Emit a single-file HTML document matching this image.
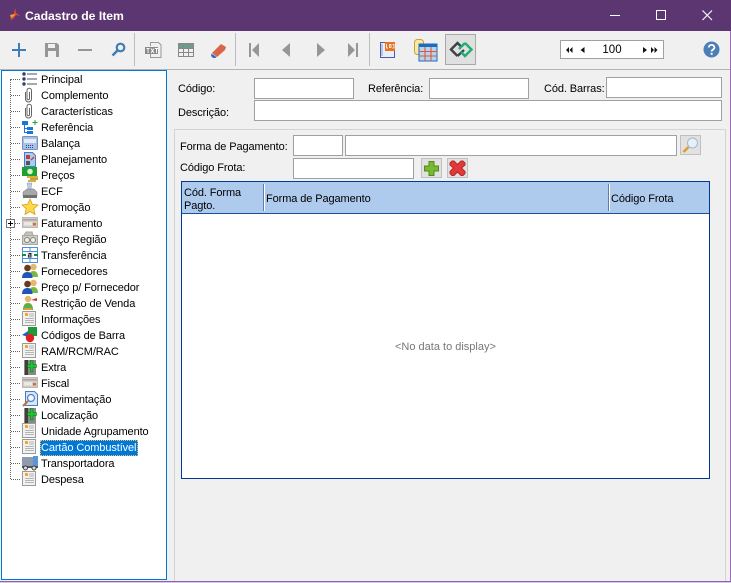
<!DOCTYPE html>
<html><head><meta charset="utf-8"><style>
html,body{margin:0;padding:0;width:731px;height:583px;overflow:hidden;background:#f0f0f0}
body{position:relative;font:11px "Liberation Sans",sans-serif;letter-spacing:-.1px;color:#000}
.a{position:absolute}
.t{position:absolute;white-space:nowrap;line-height:14px;height:14px;margin-top:1px}
.i{position:absolute;background:#fff;border:1px solid #a0a0a0;box-sizing:border-box}
.s{position:absolute;left:22px;width:16px;height:16px}
.b{position:absolute;background:#e1e1e1;border:1px solid #c0c0c0;box-sizing:border-box}
svg{position:absolute;overflow:visible}
</style></head><body>
<svg width="0" height="0" style="left:0;top:0"><defs>
<symbol id="doc" viewBox="0 0 16 16"><rect x=".5" y=".5" width="13" height="14" fill="#f2f2f2" stroke="#9a9a9a"/><rect x="3" y="2" width="3" height="3" fill="#f5a623"/><path d="M7 3h5M7 5h5M3 7.500h9M3 9.500h9M3 11.500h9" stroke="#b4b4b4"/></symbol>
<symbol id="clip" viewBox="0 0 16 16"><path d="M3.500 5v7a3 3 0 0 0 6 0V3.500a2.200 2.200 0 0 0-4.500 0V11.500a1 1 0 0 0 2.500 0V5" fill="none" stroke="#666" stroke-width="1"/></symbol>
<symbol id="card" viewBox="0 0 16 16"><rect x="0.500" y="2.500" width="15" height="10" fill="#d2cdca" stroke="#bcb8b4"/><rect x="1" y="4" width="14" height="1.500" fill="#a8a29e"/><rect x="2" y="7" width="8" height="3.500" fill="#ece8e6"/><rect x="11" y="8" width="3" height="2.500" fill="#d9683c"/></symbol>
<symbol id="ppl" viewBox="0 0 16 16"><circle cx="11.500" cy="4" r="3.200" fill="#e8b56f"/><path d="M7 14c0-4 2-6 4.500-6S16 10 16 14z" fill="#76b843"/><circle cx="5.500" cy="5" r="3.300" fill="#6b3a1e"/><path d="M0 15c0-4 2-6 5.500-6S10.500 11 10.500 15z" fill="#2255b8"/></symbol>
<symbol id="ext" viewBox="0 0 16 16"><rect x="2" y="1" width="12" height="15" fill="#8a8a84"/><rect x="3" y="1" width="3" height="15" fill="#3f3f3c"/><path d="M8.500 1.500h2.500v4h3.500v3H11v4.500H8.500V8.500H5.500v-3h3z" fill="#17c92f" stroke="#0c6a1c" stroke-width=".5"/></symbol>
</defs></svg>

<!-- title bar -->
<div class="a" style="left:0;top:0;width:731px;height:31px;background:#5c3670"></div>
<svg style="left:9px;top:8px" width="12" height="12"><path d="M6 0L7 5 11 8 7 7 4 11 1 12 5 6z" fill="#e8502a"/><path d="M1 7l4-1 1 1-4 3z" fill="#f0a030"/></svg>
<div class="t" style="left:25px;top:8px;color:#fff;font-weight:bold;font-size:12.2px;letter-spacing:0">Cadastro de Item</div>
<div class="a" style="left:610px;top:15px;width:10px;height:1px;background:#fff"></div>
<div class="a" style="left:656px;top:10px;width:10px;height:10px;border:1px solid #fff;box-sizing:border-box"></div>
<svg style="left:702px;top:10px" width="11" height="11"><path d="M.5.5l9.500 9.500M10 .5L.5 10" stroke="#fff" stroke-width="1.100"/></svg>

<!-- toolbar -->
<div class="a" style="left:0;top:69px;width:731px;height:1px;background:#b4b4b4"></div>
<div class="a" style="left:134px;top:33px;width:1px;height:33px;background:#bdbdbd"></div>
<div class="a" style="left:235px;top:33px;width:1px;height:33px;background:#bdbdbd"></div>
<div class="a" style="left:369px;top:33px;width:1px;height:33px;background:#bdbdbd"></div>
<svg style="left:12px;top:43px" width="14" height="14"><path d="M7 0v14M0 7h14" stroke="#3f7cb8" stroke-width="2"/></svg>
<svg style="left:45px;top:43px" width="14" height="14"><path d="M0 0h12l2 2v12H0z" fill="#969696"/><rect x="3" y="1" width="7" height="4" fill="#f0f0f0"/><rect x="3" y="8" width="8" height="6" fill="#f0f0f0"/></svg>
<div class="a" style="left:78px;top:49px;width:14px;height:2px;background:#969696"></div>
<svg style="left:111px;top:42px" width="15" height="15"><circle cx="9.500" cy="5.500" r="3.800" fill="none" stroke="#3f7cb8" stroke-width="2.200"/><path d="M6.500 8.500L1.500 13.500" stroke="#3f7cb8" stroke-width="2.600"/></svg>
<svg style="left:145px;top:42px" width="17" height="16"><path d="M5.500 4V.5h8l2.500 2.500V15.500H5.500V12" fill="#f0f0f0" stroke="#999"/><rect x="0" y="5" width="13" height="7" fill="#8a8a8a"/><path d="M1.500 6.500h3M3 6.500V11M6 6.500l3 4.500M9 6.500l-3 4.500M10 6.500h3M11.500 6.500V11" stroke="#fff" stroke-width=".9" fill="none"/></svg>
<svg style="left:178px;top:43px" width="16" height="14"><rect x=".5" y=".5" width="15" height="13" fill="#f0f0f0" stroke="#888"/><rect x="1" y="1" width="14" height="4" fill="#6d9c8c"/><path d="M0 5.500h16M0 9.500h16M5.500 1v13M10.500 1v13" stroke="#888"/></svg>
<svg style="left:211px;top:42px" width="16" height="16"><path d="M1 11L10 2l5 3-1 3-8 7z" fill="#d9644a"/><path d="M0.500 11.500l5 3.500-1 1H2L0 14z" fill="#2f70c0"/></svg>
<svg style="left:249px;top:43px" width="10" height="14"><path d="M0 0h2v14H0zM10 0v14L3 7z" fill="#969696"/></svg>
<svg style="left:282px;top:43px" width="8" height="14"><path d="M8 0v14L0 7z" fill="#969696"/></svg>
<svg style="left:317px;top:43px" width="8" height="14"><path d="M0 0v14l8-7z" fill="#969696"/></svg>
<svg style="left:348px;top:43px" width="10" height="14"><path d="M8 0h2v14H8zM0 0v14l7-7z" fill="#969696"/></svg>
<svg style="left:380px;top:41px" width="15" height="17"><rect x=".5" y="1.500" width="14" height="15" fill="#e8eefa" stroke="#4a5fa8"/><path d="M2 3v12" stroke="#8aa0d0"/><rect x="5" y="1" width="10" height="9" fill="#e8741e"/><path d="M6.500 3v4h1.500M9.500 3.500h1.500v3h-1.500zM12.500 3.500h1.500v3.500h-1.500" stroke="#fff" fill="none" stroke-width=".8"/></svg>
<svg style="left:414px;top:39px" width="23" height="23"><rect x=".5" y=".500" width="9" height="15" rx="3" fill="#fbe7a8" stroke="#c9a130"/><rect x="5" y="5" width="18" height="17" fill="#b5d5ef" stroke="#1a6cc0"/><rect x="5" y="5" width="18" height="3" fill="#1a6cc0"/><path d="M5 12.500h18M5 17h18M11 8v14M17 8v14" stroke="#e2553a" stroke-width="1.100"/></svg>
<div class="a" style="left:445px;top:34px;width:31px;height:31px;background:#e0e0e0;border:1px solid #a8a8a8;box-sizing:border-box"></div>
<svg style="left:450px;top:41px" width="23" height="17"><path d="M7.500 15L1 8.500 7.500 2 11.500 6M7.500 15L14 9" fill="none" stroke="#3c4048" stroke-width="2.400"/><path d="M15 2L21.500 8.500 15 15 11 11M15 2L9 8" fill="none" stroke="#1fae72" stroke-width="2.400"/></svg>
<div class="a" style="left:560px;top:40px;width:104px;height:19px;background:#fff;border:1px solid #a0a0a0;box-sizing:border-box"></div>
<svg style="left:566px;top:47px" width="92" height="6"><path d="M0 3l3-3v6zM3.500 3l3-3v6zM14.500 3l4-3v6zM77 0l4 3-4 3zM85 0l3 3-3 3zM88.500 0l3 3-3 3z" fill="#111"/></svg>
<div class="t" style="left:592px;top:42px;width:40px;text-align:center;font-size:11.500px;letter-spacing:0">100</div>
<svg style="left:703px;top:41px" width="17" height="17"><circle cx="8.500" cy="8.500" r="8" fill="#4a7fb8"/><path d="M5.800 6.500c0-3.500 5.600-3.500 5.600 0 0 2.200-2.800 2-2.800 4" fill="none" stroke="#fff" stroke-width="1.800"/><rect x="7.600" y="11.800" width="2" height="2" fill="#fff"/></svg>

<!-- tree -->
<div class="a" style="left:1px;top:70px;width:166px;height:510px;background:#fff;border:1px solid #0078d7;box-sizing:border-box"></div>
<div class="a" style="left:10px;top:79px;height:400px;border-left:1px dotted #666"></div>
<svg style="left:0;top:0" width="40" height="490"><path d="M11 79.500h9M11 95.500h9M11 111.500h9M11 127.500h9M11 143.500h9M11 159.500h9M11 175.500h9M11 191.500h9M11 207.500h9M15 223.500h5M11 239.500h9M11 255.500h9M11 271.500h9M11 287.500h9M11 303.500h9M11 319.500h9M11 335.500h9M11 351.500h9M11 367.500h9M11 383.500h9M11 399.500h9M11 415.500h9M11 431.500h9M11 447.500h9M11 463.500h9M11 479.500h9" stroke="#666" stroke-dasharray="1 1" fill="none"/></svg>
<div class="a" style="left:6px;top:219px;width:9px;height:9px;background:#fff;border:1px solid #777;box-sizing:border-box"></div>
<svg style="left:6px;top:219px" width="9" height="9"><path d="M2 4.500h5M4.500 2v5" stroke="#000"/></svg>

<svg class="s" style="top:71px"><circle cx="2" cy="3" r="1.700" fill="#33405c"/><circle cx="2" cy="8" r="1.700" fill="#33405c"/><circle cx="2" cy="13" r="1.700" fill="#33405c"/><path d="M5 3h10M5 8h10M5 13h10" stroke="#44506c"/></svg>
<svg class="s" style="top:87px"><use href="#clip" width="16" height="16"/></svg>
<svg class="s" style="top:103px"><use href="#clip" width="16" height="16"/></svg>
<svg class="s" style="top:119px"><rect x="0" y="2" width="6" height="4" fill="#1a76d8"/><rect x="5" y="8" width="6" height="3" fill="#1a76d8"/><rect x="5" y="12" width="6" height="3" fill="#1a76d8"/><path d="M2.500 6v7.500H5M2.500 9.500H5" stroke="#1a76d8" fill="none"/><path d="M13 1v5M10.500 3.500h5" stroke="#2a9a3a"/></svg>
<svg class="s" style="top:135px"><rect x=".5" y="1.500" width="15" height="13" rx="1" fill="#a8c0e8" stroke="#7c90b8"/><rect x="2" y="4" width="12" height="4" fill="#e4ecfa"/><path d="M4 10.500h8M4 12.500h8" stroke="#334a80" stroke-dasharray="1 1"/></svg>
<svg class="s" style="top:151px"><path d="M2.500 1.500h8l3 3v11h-11z" fill="#a8cdf0" stroke="#4a7cc0"/><rect x="4" y="4" width="4" height="4" fill="#c04040"/><rect x="4" y="10" width="4" height="4" fill="#555"/><path d="M9 9l3-3" stroke="#d04030" stroke-width="1.500"/></svg>
<svg class="s" style="top:167px"><rect x="0" y="0" width="15" height="9" fill="#1ea030"/><circle cx="8" cy="4.500" r="2.800" fill="#d8f5d0"/><rect x="5" y="9" width="11" height="2" fill="#d8b040"/><rect x="8" y="11" width="8" height="2" fill="#c8a030"/><rect x="6" y="13" width="8" height="2" fill="#d8b040"/></svg>
<svg class="s" style="top:183px"><path d="M5 0h5l-1 5 1 2H5l1-2z" fill="#b8cce8" stroke="#8aa0c8" stroke-width=".5"/><path d="M1 9l4-3h7l3 3v4H1z" fill="#a8a8a8" stroke="#777" stroke-width=".5"/><rect x="1" y="12" width="14" height="3" fill="#707070"/></svg>
<svg class="s" style="top:199px"><path d="M8 0l2.400 5.300 5.600.6-4.200 3.800 1.200 5.700L8 12.500 3 15.400l1.200-5.700L0 5.900l5.600-.6z" fill="#fdd848" stroke="#d8a020" stroke-width=".8"/></svg>
<svg class="s" style="top:215px"><use href="#card" width="16" height="16"/></svg>
<svg class="s" style="top:231px"><rect x=".5" y="4.500" width="15" height="9" fill="#cfcfc8" stroke="#a8a8a0"/><path d="M2 4l2-3h6l1 3" fill="#c4c4bc" stroke="#a8a8a0"/><circle cx="5" cy="9" r="2.500" fill="#eee" stroke="#808878"/><circle cx="11" cy="9" r="2.500" fill="#eee" stroke="#808878"/></svg>
<svg class="s" style="top:247px"><rect x=".5" y=".5" width="15" height="15" fill="#fff" stroke="#4a90e0"/><path d="M0 4.500h16M0 11.500h16M8 0v4M8 12v4" stroke="#4a90e0"/><path d="M0 8h4M12 8h4" stroke="#1a8a3a" stroke-width="2"/><rect x="5" y="5" width="6" height="6" fill="#e4f0fa"/><path d="M6.500 6.500h2.500v3.500H6.500V8H9" stroke="#222" fill="none" stroke-width=".9"/></svg>
<svg class="s" style="top:263px"><use href="#ppl" width="16" height="16"/></svg>
<svg class="s" style="top:279px"><use href="#ppl" width="16" height="16"/></svg>
<svg class="s" style="top:295px"><circle cx="6" cy="4" r="3.200" fill="#e8b56f"/><path d="M1 15c0-5 2-7 5-7s5 2 5 7z" fill="#5cae48"/><rect x="2" y="13" width="8" height="2" fill="#d8a030"/><path d="M9 5l6-2v3z" fill="#d82a2a"/></svg>
<svg class="s" style="top:311px"><use href="#doc" width="16" height="16"/></svg>
<svg class="s" style="top:327px"><rect x="6" y="0" width="9" height="9" fill="#1f9a38"/><path d="M0 8l6-4v6z" fill="#2060c8"/><circle cx="8" cy="11" r="4.200" fill="#e02020"/></svg>
<svg class="s" style="top:343px"><use href="#doc" width="16" height="16"/></svg>
<svg class="s" style="top:359px"><use href="#ext" width="16" height="16"/></svg>
<svg class="s" style="top:375px"><use href="#card" width="16" height="16"/></svg>
<svg class="s" style="top:391px"><path d="M3.500.5h9l3 3v11h-12z" fill="#d4e6fa" stroke="#4a7cc0"/><circle cx="9" cy="7" r="3.500" fill="#eef6ff" stroke="#5a80b8" stroke-width="1.200"/><path d="M6 10l-5 5" stroke="#b07a30" stroke-width="2"/></svg>
<svg class="s" style="top:407px"><use href="#ext" width="16" height="16"/></svg>
<svg class="s" style="top:423px"><use href="#doc" width="16" height="16"/></svg>
<svg class="s" style="top:439px"><use href="#doc" width="16" height="16"/></svg>
<svg class="s" style="top:455px"><rect x="0" y="2" width="11" height="9" fill="#8e9cb0"/><rect x="11" y="1" width="5" height="10" fill="#5a96d8"/><rect x="0" y="11" width="16" height="2" fill="#555"/><circle cx="3.500" cy="13" r="2" fill="#ddd" stroke="#444"/><circle cx="12" cy="13" r="2" fill="#ddd" stroke="#444"/></svg>
<svg class="s" style="top:471px"><use href="#doc" width="16" height="16"/></svg>

<div class="a" style="left:40px;top:440px;width:98px;height:16px;background:#0078d7;border:1px dotted #f0c060;box-sizing:border-box"></div>
<div class="t" style="left:41px;top:72px">Principal</div>
<div class="t" style="left:41px;top:88px">Complemento</div>
<div class="t" style="left:41px;top:104px">Características</div>
<div class="t" style="left:41px;top:120px">Referência</div>
<div class="t" style="left:41px;top:136px">Balança</div>
<div class="t" style="left:41px;top:152px">Planejamento</div>
<div class="t" style="left:41px;top:168px">Preços</div>
<div class="t" style="left:41px;top:184px">ECF</div>
<div class="t" style="left:41px;top:200px">Promoção</div>
<div class="t" style="left:41px;top:216px">Faturamento</div>
<div class="t" style="left:41px;top:232px">Preço Região</div>
<div class="t" style="left:41px;top:248px">Transferência</div>
<div class="t" style="left:41px;top:264px">Fornecedores</div>
<div class="t" style="left:41px;top:280px">Preço p/ Fornecedor</div>
<div class="t" style="left:41px;top:296px">Restrição de Venda</div>
<div class="t" style="left:41px;top:312px">Informações</div>
<div class="t" style="left:41px;top:328px">Códigos de Barra</div>
<div class="t" style="left:41px;top:344px">RAM/RCM/RAC</div>
<div class="t" style="left:41px;top:360px">Extra</div>
<div class="t" style="left:41px;top:376px">Fiscal</div>
<div class="t" style="left:41px;top:392px">Movimentação</div>
<div class="t" style="left:41px;top:408px">Localização</div>
<div class="t" style="left:41px;top:424px">Unidade Agrupamento</div>
<div class="t" style="left:41px;top:440px;color:#fff">Cartão Combustível</div>
<div class="t" style="left:41px;top:456px">Transportadora</div>
<div class="t" style="left:41px;top:472px">Despesa</div>

<!-- top form -->
<div class="t" style="left:178px;top:81px">Código:</div>
<div class="i" style="left:254px;top:78px;width:100px;height:21px"></div>
<div class="t" style="left:368px;top:81px">Referência:</div>
<div class="i" style="left:429px;top:78px;width:100px;height:21px"></div>
<div class="t" style="left:544px;top:81px">Cód. Barras:</div>
<div class="i" style="left:606px;top:77px;width:116px;height:21px"></div>
<div class="t" style="left:178px;top:105px">Descrição:</div>
<div class="i" style="left:254px;top:100px;width:468px;height:21px"></div>

<!-- panel -->
<div class="a" style="left:174px;top:129px;width:552px;height:453px;border:1px solid #d4d4d4;border-bottom:0;box-sizing:border-box"></div>
<div class="t" style="left:180px;top:139px">Forma de Pagamento:</div>
<div class="i" style="left:293px;top:135px;width:50px;height:21px"></div>
<div class="i" style="left:345px;top:135px;width:332px;height:21px"></div>
<div class="b" style="left:680px;top:135px;width:21px;height:20px"></div>
<svg style="left:682px;top:137px" width="17" height="17"><circle cx="10.500" cy="6" r="5" fill="#e4f0fc" stroke="#a8b8cc"/><path d="M6.500 10L1.500 15" stroke="#e09a28" stroke-width="2.400"/></svg>
<div class="t" style="left:180px;top:160px">Código Frota:</div>
<div class="i" style="left:293px;top:158px;width:121px;height:21px"></div>
<div class="b" style="left:421px;top:158px;width:21px;height:20px"></div>
<svg style="left:424px;top:161px" width="15" height="15"><path d="M5 .5h5v4.500h4.500v5H10v4.500H5V10H.5V5H5z" fill="#7ab82e" stroke="#4f8a1c"/></svg>
<div class="b" style="left:447px;top:158px;width:21px;height:20px"></div>
<svg style="left:449px;top:160px" width="17" height="16"><path d="M1 3l2-2 2 0 3.500 3.500L12 1h2l2 2v2l-3.500 3 3.500 3.500v2l-2 2h-2L8.500 12 5 15.500H3l-2-2v-2L4.500 8 1 5z" fill="#e2383a" stroke="#b02a2a"/></svg>

<!-- grid -->
<div class="a" style="left:181px;top:181px;width:529px;height:298px;background:#fff;border:1px solid #003a96;box-sizing:border-box"></div>
<div class="a" style="left:182px;top:182px;width:527px;height:31px;background:#aecbee;border-bottom:1px solid #8fb0de;box-sizing:content-box"></div>
<div class="a" style="left:182px;top:213px;width:527px;height:1px;background:#1b4e9e"></div>
<div class="a" style="left:263px;top:184px;width:1px;height:27px;background:#5f7da8"></div>
<div class="a" style="left:264px;top:184px;width:1px;height:27px;background:#fff"></div>
<div class="a" style="left:608px;top:184px;width:1px;height:27px;background:#5f7da8"></div>
<div class="a" style="left:609px;top:184px;width:1px;height:27px;background:#fff"></div>
<div class="t" style="left:184px;top:185px">Cód. Forma</div>
<div class="t" style="left:184px;top:198px">Pagto.</div>
<div class="t" style="left:266px;top:191px">Forma de Pagamento</div>
<div class="t" style="left:611px;top:191px">Código Frota</div>
<div class="t" style="left:395px;top:339px;color:#777;letter-spacing:0">&lt;No data to display&gt;</div>

<!-- window edge -->
<div class="a" style="left:730px;top:31px;width:1px;height:552px;background:#9a6ab8"></div>
<div class="a" style="left:0;top:581px;width:731px;height:1px;background:#8a64a8"></div>
<div class="a" style="left:0;top:582px;width:731px;height:1px;background:#d8c8e4"></div>
</body></html>
